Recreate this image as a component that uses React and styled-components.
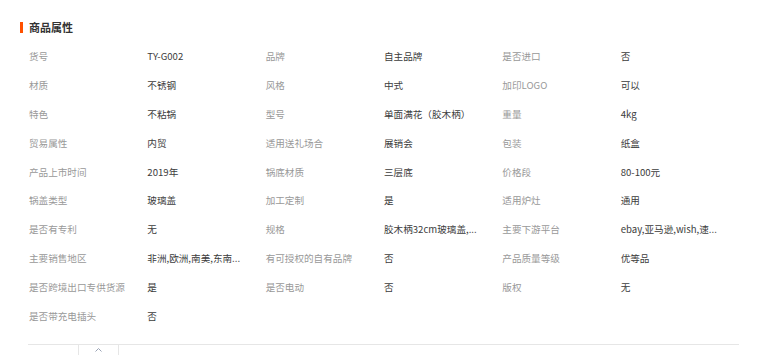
import styled, { createGlobalStyle } from 'styled-components'

const GlobalStyle = createGlobalStyle`
    html, body {
        margin: 0;
        padding: 0;
        background: #fff;
    }
    body {
        font-family: "Noto Sans CJK SC", "Liberation Sans", sans-serif;
        color: #333;
    }
`

const Page = styled.div`
    padding: 22px 0 0 20px;
    width: 719px;
`
const Header = styled.div`
    display: flex;
    align-items: center;
    gap: 6px;
    height: 11px;
`
const Bar = styled.span`
    width: 3px;
    height: 11px;
    background-color: #ff5000;
`
const Title = styled.h2`
    margin: 0;
    font-size: 11px;
    font-weight: 700;
    line-height: 11px;
    color: #333;
`
const Table = styled.div`
    display: grid;
    grid-template-columns: repeat(6, 1fr);
    grid-auto-rows: 28.9px;
    margin: 8.5px 0 0 8px;
    padding-left: 1px;
    width: 710px;
`
const Cell = styled.div`
    display: flex;
    align-items: center;
    min-width: 0;
    font-size: 9.6px;
    white-space: nowrap;
    color: ${props => (props.$label ? '#999' : '#3c3c3c')};
`
const Footer = styled.div`
    margin: 13.5px 0 0 8px;
    width: 711px;
    border-top: 1px solid #e6e6e6;
`
const Toggle = styled.button`
    display: flex;
    align-items: center;
    justify-content: center;
    margin-left: 50px;
    width: 41px;
    height: 11px;
    padding: 0;
    background: #fff;
    border: none;
    border-left: 1px solid #e6e6e6;
    border-right: 1px solid #e6e6e6;
    cursor: pointer;
`

// long values are shown cut short, the full text sits in the title
const attributes = [
    ['货号', 'TY-G002'],
    ['品牌', '自主品牌'],
    ['是否进口', '否'],
    ['材质', '不锈钢'],
    ['风格', '中式'],
    ['加印LOGO', '可以'],
    ['特色', '不粘锅'],
    ['型号', '单面满花（胶木柄）'],
    ['重量', '4kg'],
    ['贸易属性', '内贸'],
    ['适用送礼场合', '展销会'],
    ['包装', '纸盒'],
    ['产品上市时间', '2019年'],
    ['锅底材质', '三层底'],
    ['价格段', '80-100元'],
    ['锅盖类型', '玻璃盖'],
    ['加工定制', '是'],
    ['适用炉灶', '通用'],
    ['是否有专利', '无'],
    ['规格', '胶木柄32cm玻璃盖,不锈钢柄32cm', 11],
    ['主要下游平台', 'ebay,亚马逊,wish,速卖通,独立站', 15],
    ['主要销售地区', '非洲,欧洲,南美,东南亚,北美', 11],
    ['有可授权的自有品牌', '否'],
    ['产品质量等级', '优等品'],
    ['是否跨境出口专供货源', '是'],
    ['是否电动', '否'],
    ['版权', '无'],
    ['是否带充电插头', '否'],
]

const shorten = (value, limit) =>
    limit && value.length > limit ? value.slice(0, limit) + '...' : value

const App = () => {
    return (
        <Page>
            <GlobalStyle />
            <Header>
                <Bar />
                <Title>商品属性</Title>
            </Header>
            <Table>
                {attributes.map(([name, value, limit]) => [
                    <Cell key={name + '-l'} $label>{name}</Cell>,
                    <Cell key={name + '-v'} title={value}>{shorten(value, limit)}</Cell>,
                ])}
            </Table>
            <Footer>
                <Toggle aria-label="收起">
                    <svg width="7" height="4" viewBox="0 0 7 4">
                        <polyline points="0.5,3.5 3.5,0.5 6.5,3.5" fill="none" stroke="#9aa3b5" strokeWidth="1" />
                    </svg>
                </Toggle>
            </Footer>
        </Page>
    )
}

export default App
